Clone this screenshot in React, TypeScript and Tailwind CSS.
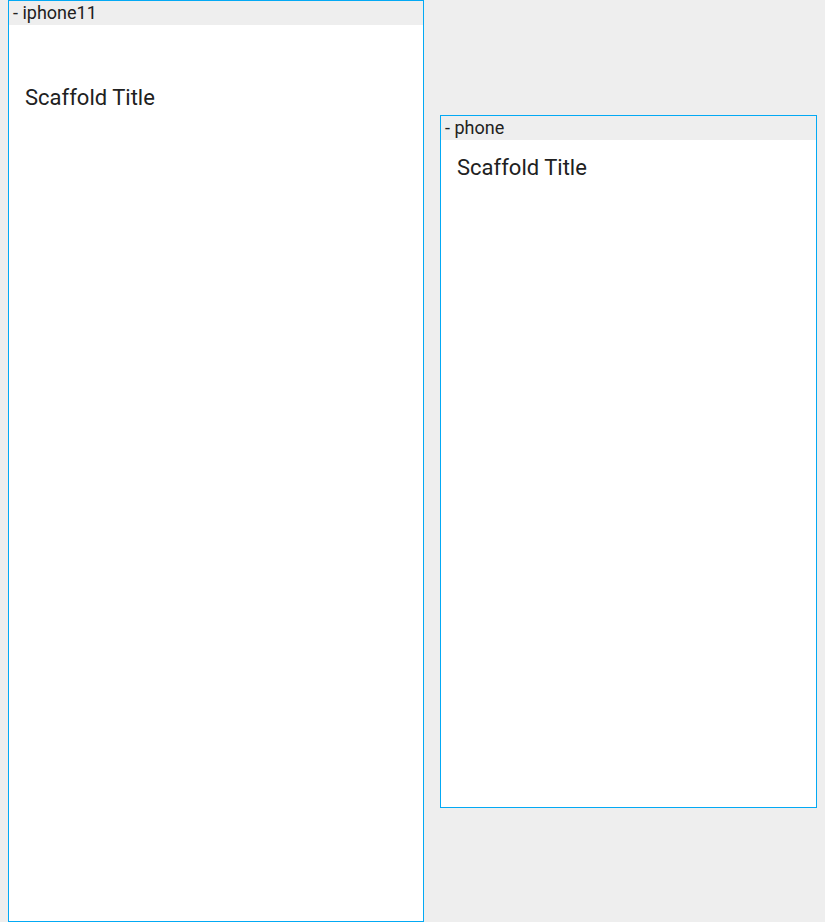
const devices = [
  { name: "iphone11", width: "w-[414px]", height: "h-[896px]", safeTop: true },
  { name: "phone", width: "w-[375px]", height: "h-[667px]", safeTop: false },
];

function DeviceFrame({ name, width, height, safeTop }: { name: string; width: string; height: string; safeTop: boolean }) {
  return (
    <div className="flex flex-col border border-[#03a9f4] bg-white">
      <div className="h-6 bg-[#eeeeee] px-1 text-[18px] leading-6 text-[#212121]">- {name}</div>
      <div className={`${width} ${height} flex flex-col bg-white`}>
        {safeTop && <div className="h-11" />}
        <div className="flex h-14 items-center px-4 text-[22px] text-[#212121]">Scaffold Title</div>
      </div>
    </div>
  );
}

export default function App() {
  return (
    <div
      className="flex h-[922px] items-center gap-4 overflow-hidden bg-[#eeeeee] pl-2"
      style={{ fontFamily: "Roboto, 'Liberation Sans', sans-serif" }}
    >
      {devices.map((d) => (
        <DeviceFrame key={d.name} {...d} />
      ))}
    </div>
  );
}
